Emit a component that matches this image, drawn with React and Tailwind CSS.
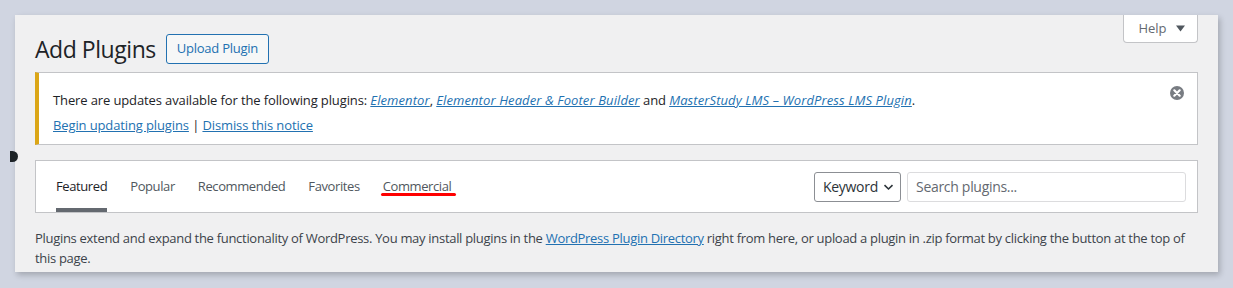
import React from 'react';

const font = { fontFamily: '"Open Sans", "Noto Sans", sans-serif' };

const tabs = ['Featured', 'Popular', 'Recommended', 'Favorites', 'Commercial'];

// little dismiss icon, grey disc with a white cross
const DismissIcon = () => (
  <svg width="14" height="14" viewBox="0 0 14 14">
    <circle cx="7" cy="7" r="7" fill="#787c82" />
    <path d="M4.3 4.3 L9.7 9.7 M9.7 4.3 L4.3 9.7" stroke="#fff" strokeWidth="2.2" strokeLinecap="round" />
  </svg>
);

const Chevron = () => (
  <svg width="11" height="10" viewBox="0 0 11 10" className="ml-[5px] mt-[1px]">
    <path d="M1.5 3.2 L5.5 7 L9.5 3.2" fill="none" stroke="#2c3338" strokeWidth="1.6" />
  </svg>
);

const Caret = () => (
  <svg width="9" height="7" viewBox="0 0 9 7">
    <path d="M0 0.5 H9 L4.5 6.5 Z" fill="#50575e" />
  </svg>
);

export default function App() {
  return (
    <div className="relative min-h-[288px] w-[1233px] bg-[#d0d5e1] pt-[15px] pl-[15px]" style={font}>
      {/* stray dot on the left edge */}
      <div className="absolute left-[10px] top-[151px] z-10 h-[11px] w-[8px] rounded-r-full bg-[#1d2327]" />

      <div className="relative w-[1203px] bg-[#f0f0f1] px-[20px] pb-[4px] shadow-[2px_3px_6px_rgba(0,0,0,0.22)]">
        {/* Help tab */}
        <button className="absolute right-[20px] top-0 flex h-[28px] w-[75px] items-center justify-center gap-[9px] rounded-b-[4px] border border-t-0 border-[#c3c4c7] bg-white pl-[2px] text-[13px] text-[#646970]">
          Help
          <Caret />
        </button>

        {/* Heading */}
        <div className="flex items-center pt-[19px]">
          <h1 className="text-[23px] font-normal leading-[29px] tracking-[-0.45px] text-[#1d2327]">Add Plugins</h1>
          <button className="ml-[10px] h-[30px] rounded-[3px] border border-[#2271b1] bg-[#f6f7f7] px-[10px] text-[13px] tracking-[-0.25px] text-[#2271b1]">
            Upload Plugin
          </button>
        </div>

        {/* Update notice */}
        <div className="relative mt-[8px] border border-l-4 border-[#c3c4c7] border-l-[#dba617] bg-white pl-[14px] pr-[40px] pt-[17px] pb-[9px] text-[13px] leading-[20px] tracking-[-0.12px] text-[#1d2327]">
          <p>
            There are updates available for the following plugins:{' '}
            <a className="italic tracking-[0.1px] text-[#2271b1] underline">Elementor</a>,{' '}
            <a className="italic tracking-[0.1px] text-[#2271b1] underline">Elementor Header &amp; Footer Builder</a> and{' '}
            <a className="italic tracking-[0.1px] text-[#2271b1] underline">MasterStudy LMS – WordPress LMS Plugin</a>.
          </p>
          <p className="mt-[5px]">
            <a className="text-[#2271b1] underline">Begin updating plugins</a> |{' '}
            <a className="text-[#2271b1] underline">Dismiss this notice</a>
          </p>
          <span className="absolute right-[13px] top-[13px]">
            <DismissIcon />
          </span>
        </div>

        {/* Filter bar */}
        <div className="mt-[15px] flex h-[53px] items-stretch justify-between border border-[#c3c4c7] bg-white pl-[20px] pr-[11px]">
          <ul className="flex gap-[23px]">
            {tabs.map((t, i) => (
              <li
                key={t}
                className={
                  'relative flex items-center border-b-4 pt-[4px] text-[13px] tracking-[-0.4px] ' +
                  (i === 0 ? 'border-[#646970] text-[#1d2327]' : 'border-transparent text-[#50575e]')
                }
              >
                {t}
                {t === 'Commercial' && (
                  <span className="absolute left-[-2px] right-[-5px] top-[32px] h-[3px] rounded-full bg-[#ff0000]" />
                )}
              </li>
            ))}
          </ul>
          <div className="flex items-center gap-[6px]">
            <div className="flex h-[30px] w-[87px] items-center rounded-[3px] border border-[#8c8f94] pl-[8px] text-[14px] tracking-[-0.3px] text-[#2c3338]">
              Keyword
              <Chevron />
            </div>
            <div className="flex h-[30px] w-[279px] items-center rounded-[3px] border border-[#dcdcde] pl-[8px] text-[14px] tracking-[-0.3px] text-[#646970]">
              Search plugins...
            </div>
          </div>
        </div>

        {/* Description */}
        <p className="mt-[15px] text-[13px] leading-[20px] tracking-[-0.3px] text-[#3c434a]">
          Plugins extend and expand the functionality of WordPress. You may install plugins in the{' '}
          <a className="text-[#2271b1] underline">WordPress Plugin Directory</a> right from here, or upload a plugin in .zip
          format by clicking the button at the top of this page.
        </p>
      </div>
    </div>
  );
}
